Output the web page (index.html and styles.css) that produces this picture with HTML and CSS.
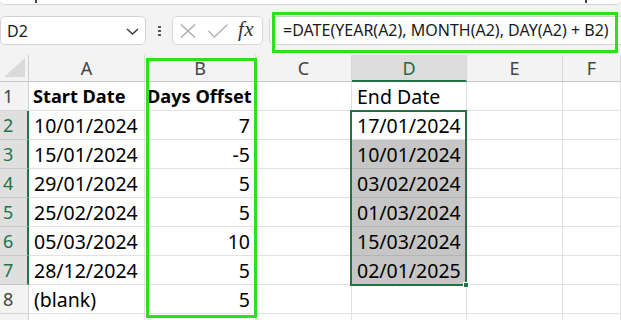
FILE: index.html
```html
<!DOCTYPE html>
<html>
<head>
<meta charset="utf-8">
<link rel="stylesheet" href="styles.css">
</head>
<body>
<div class="app">
  <div class="topstrip"><span class="tick t1"></span><span class="tick t2"></span></div>
  <div class="toolbar">
    <div class="namebox">
      <span class="ref">D2</span>
      <svg class="chev" width="13" height="7" viewBox="0 0 13 7"><path d="M1 1 L6.5 6 L12 1" fill="none" stroke="#333" stroke-width="1.3"/></svg>
    </div>
    <div class="dots"><span></span><span></span><span></span></div>
    <div class="fbuttons">
      <svg class="ico-x" width="16" height="14" viewBox="0 0 16 14"><path d="M1 0.5 L15 13.5 M15 0.5 L1 13.5" stroke="#a8a8a8" stroke-width="1.3" fill="none"/></svg>
      <svg class="ico-ok" width="20" height="14" viewBox="0 0 20 14"><path d="M0.5 7 L6.5 13 L19.5 0.5" stroke="#b0b0b0" stroke-width="1.3" fill="none"/></svg>
      <span class="fx">fx</span>
    </div>
    <div class="finput">=DATE(YEAR(A2), MONTH(A2), DAY(A2) + B2)</div>
  </div>
  <div class="sheet">
    <div class="corner"><svg width="21" height="19" viewBox="0 0 21 19"><polygon points="21,0 21,19 0,19" fill="#dadada"/></svg></div>
    <div class="ch">A</div>
    <div class="ch">B</div>
    <div class="ch">C</div>
    <div class="ch sel">D</div>
    <div class="ch">E</div>
    <div class="ch">F</div>

    <div class="rh">1</div>
    <div class="c b">Start Date</div>
    <div class="c b tight">Days Offset</div>
    <div class="c"></div>
    <div class="c">End Date</div>
    <div class="c"></div>
    <div class="c"></div>

    <div class="rh sel">2</div>
    <div class="c">10/01/2024</div>
    <div class="c r">7</div>
    <div class="c"></div>
    <div class="c">17/01/2024</div>
    <div class="c"></div>
    <div class="c"></div>

    <div class="rh sel">3</div>
    <div class="c">15/01/2024</div>
    <div class="c r">-5</div>
    <div class="c"></div>
    <div class="c g">10/01/2024</div>
    <div class="c"></div>
    <div class="c"></div>

    <div class="rh sel">4</div>
    <div class="c">29/01/2024</div>
    <div class="c r">5</div>
    <div class="c"></div>
    <div class="c g">03/02/2024</div>
    <div class="c"></div>
    <div class="c"></div>

    <div class="rh sel">5</div>
    <div class="c">25/02/2024</div>
    <div class="c r">5</div>
    <div class="c"></div>
    <div class="c g">01/03/2024</div>
    <div class="c"></div>
    <div class="c"></div>

    <div class="rh sel">6</div>
    <div class="c">05/03/2024</div>
    <div class="c r">10</div>
    <div class="c"></div>
    <div class="c g">15/03/2024</div>
    <div class="c"></div>
    <div class="c"></div>

    <div class="rh sel">7</div>
    <div class="c">28/12/2024</div>
    <div class="c r">5</div>
    <div class="c"></div>
    <div class="c g">02/01/2025</div>
    <div class="c"></div>
    <div class="c"></div>

    <div class="rh">8</div>
    <div class="c">(blank)</div>
    <div class="c r">5</div>
    <div class="c"></div>
    <div class="c"></div>
    <div class="c"></div>
    <div class="c"></div>

    <div class="rh"></div>
    <div class="c"></div>
    <div class="c"></div>
    <div class="c"></div>
    <div class="c"></div>
    <div class="c"></div>
    <div class="c"></div>

    <div class="selection"><span class="handle"></span></div>
  </div>
  <div class="hl hl-formula"></div>
  <div class="hl hl-colb"></div>
</div>
</body>
</html>
```

FILE: styles.css
```css
* { box-sizing: border-box; }
html, body { margin: 0; padding: 0; }
body { width: 621px; height: 320px; overflow: hidden; background: #fff; font-family: "Noto Sans", sans-serif; }
.app { position: relative; width: 621px; height: 320px; overflow: hidden; background: #f3f3f3; }

.topstrip { height: 5px; background: #fff; border-bottom: 1px solid #d4d4d4; border-radius: 0 0 6px 6px; position: relative; }
.tick { position: absolute; top: 0; width: 2px; height: 3px; background: #444; }
.t1 { left: 35px; }
.t2 { left: 585px; }

.toolbar { height: 50px; display: flex; align-items: center; }
.toolbar > * { flex: none; }
.namebox { width: 146px; height: 29px; background: #fff; border: 1px solid #d3d3d3; border-radius: 5px; display: flex; align-items: center; justify-content: space-between; padding: 0 6px 0 6px; margin-top: 1px; }
.ref { font-size: 16px; color: #1a1a1a; }
.chev { margin-top: 1px; }
.dots { width: 3px; margin: 2px 11px 0 12px; display: flex; flex-direction: column; gap: 1.5px; }
.dots span { width: 3px; height: 2.5px; background: #555; }
.fbuttons { width: 91px; height: 29px; background: #fff; border: 1px solid #d8d8d8; border-radius: 5px; display: flex; align-items: center; padding-left: 7px; margin-top: 1px; }
.ico-x { margin-right: 12px; }
.ico-ok { margin-right: 10px; }
.fx { font-family: "Liberation Serif", serif; font-style: italic; font-size: 21px; color: #333; line-height: 1; margin-top: -2px; letter-spacing: 0.5px; }
.finput { margin-left: 6px; width: 360px; height: 29px; background: #fff; border: 1px solid #d3d3d3; border-radius: 5px; font-size: 16px; color: #1a1a1a; padding-left: 13px; line-height: 27px; white-space: nowrap; margin-top: 1px; }

.sheet { position: relative; display: grid; grid-template-columns: 29px 116px 111px 96px 115px 96px 58px; grid-template-rows: 27px repeat(9, 29px); background: #fff; }
.corner { background: #f3f3f3; border-right: 1px solid #d0d0d0; border-bottom: 1px solid #c6c6c6; display: flex; align-items: flex-end; justify-content: flex-end; padding: 0 3px 4px 0; }
.ch { background: #f3f3f3; border-right: 1px solid #d6d6d6; border-bottom: 1px solid #c6c6c6; text-align: center; font-size: 18px; line-height: 27px; color: #444; }
.ch.sel { background: #dcdcdc; color: #1e6b41; border-bottom: 2px solid #217346; }
.rh { background: #f3f3f3; border-right: 1px solid #d0d0d0; border-bottom: 1px solid #d4d4d4; font-size: 18px; line-height: 28px; color: #444; padding-left: 3px; }
.rh.sel { background: #dfdfdf; color: #217346; border-right: 2px solid #217346; border-bottom-color: #c8c8c8; }
.c { border-right: 1px solid #e1e1e1; border-bottom: 1px solid #e1e1e1; font-size: 19.5px; color: #000; padding: 0 5px; display: flex; align-items: flex-end; line-height: 26px; white-space: nowrap; overflow: visible; }
.c.b { font-weight: 700; font-size: 18.2px; padding-left: 4px; line-height: 25px; padding-bottom: 1px; }
.c.tight { padding-left: 2px; }
.c.r { justify-content: flex-end; }
.c.g { background: #c6c6c6; border-bottom-color: #b4b4b4; border-right-color: #c6c6c6; }

.selection { position: absolute; left: 350px; top: 55px; width: 117px; height: 176px; border: 2px solid #217346; pointer-events: none; }
.handle { position: absolute; right: -4px; bottom: -4px; width: 6px; height: 6px; background: #217346; border: 1px solid #fff; }

.hl { position: absolute; border: 3px solid #2de01b; pointer-events: none; }
.hl-formula { left: 272px; top: 12px; width: 346px; height: 41px; }
.hl-colb { left: 146px; top: 58px; width: 111px; height: 260px; }
```
